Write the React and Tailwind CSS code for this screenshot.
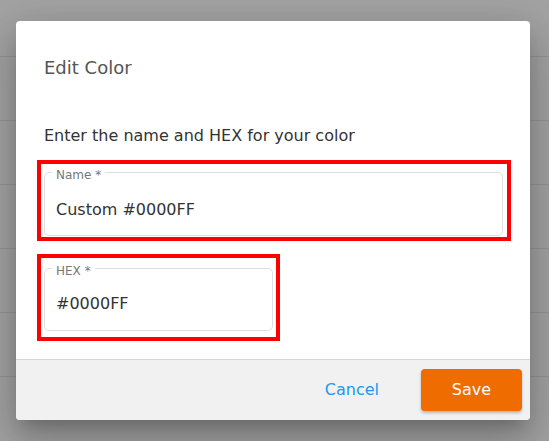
export default function App() {
  const rows = [0, 1, 2, 3, 4, 5];
  return (
    <div
      className="relative h-[441px] w-[549px] overflow-hidden bg-[#a3a3a3]"
      style={{ fontFamily: '"DejaVu Sans", Verdana, sans-serif' }}
    >
      {/* table rows behind the backdrop */}
      <div className="flex flex-col pt-[56px]">
        {rows.map((r) => (
          <div key={r} className="h-[64px] border-t border-[#93939b]" />
        ))}
      </div>

      {/* dialog */}
      <div className="absolute left-[16px] top-[21px] flex h-[399px] w-[514px] flex-col overflow-hidden rounded-[4px] bg-white shadow-[0_11px_15px_-7px_rgba(0,0,0,0.2),0_24px_38px_3px_rgba(0,0,0,0.14),0_9px_46px_8px_rgba(0,0,0,0.12)]">
        <div className="flex-1 pl-[28px]">
          <h2 className="pt-[35px] text-[18px] leading-[24px] font-normal text-[#555555]">
            Edit Color
          </h2>
          <p className="mt-[46px] text-[16px] leading-[20px] text-[#333333]">
            Enter the name and HEX for your color
          </p>

          <div className="mt-[14px] -ml-[7px] h-[81px] w-[474px] border-4 border-[#ff0000]">
            <fieldset className="-mt-px ml-[3px] h-[73px] w-[459px] rounded-[5px] border border-[#dedede] px-[11px]">
              <legend className="-ml-[4px] px-[4px] pt-[6px] text-[12px] leading-[12px] text-[#777777]">
                Name *
              </legend>
              <div className="mt-[19px] text-[16px] leading-[20px] text-[#333333]">
                Custom #0000FF
              </div>
            </fieldset>
          </div>

          <div className="mt-[13px] -ml-[7px] h-[87px] w-[243px] border-4 border-[#ff0000]">
            <fieldset className="mt-px ml-[3px] h-[72px] w-[229px] rounded-[5px] border border-[#dedede] px-[11px]">
              <legend className="-ml-[4px] px-[4px] pt-[6px] text-[12px] leading-[12px] text-[#777777]">
                HEX *
              </legend>
              <div className="mt-[17px] text-[16px] leading-[20px] text-[#333333]">
                #0000FF
              </div>
            </fieldset>
          </div>
        </div>

        <div className="flex h-[61px] items-center justify-end border-t border-[#d6d6d6] bg-[#f1f1f1] pr-[8px]">
          <button className="mr-[26px] px-[16px] text-[16px] leading-[20px] text-[#2196f3]">
            Cancel
          </button>
          <button className="h-[42px] w-[101px] rounded-[4px] bg-[#ef6c00] text-[16px] leading-[20px] text-white shadow-[0_2px_3px_rgba(0,0,0,0.25)]">
            Save
          </button>
        </div>
      </div>
    </div>
  );
}
